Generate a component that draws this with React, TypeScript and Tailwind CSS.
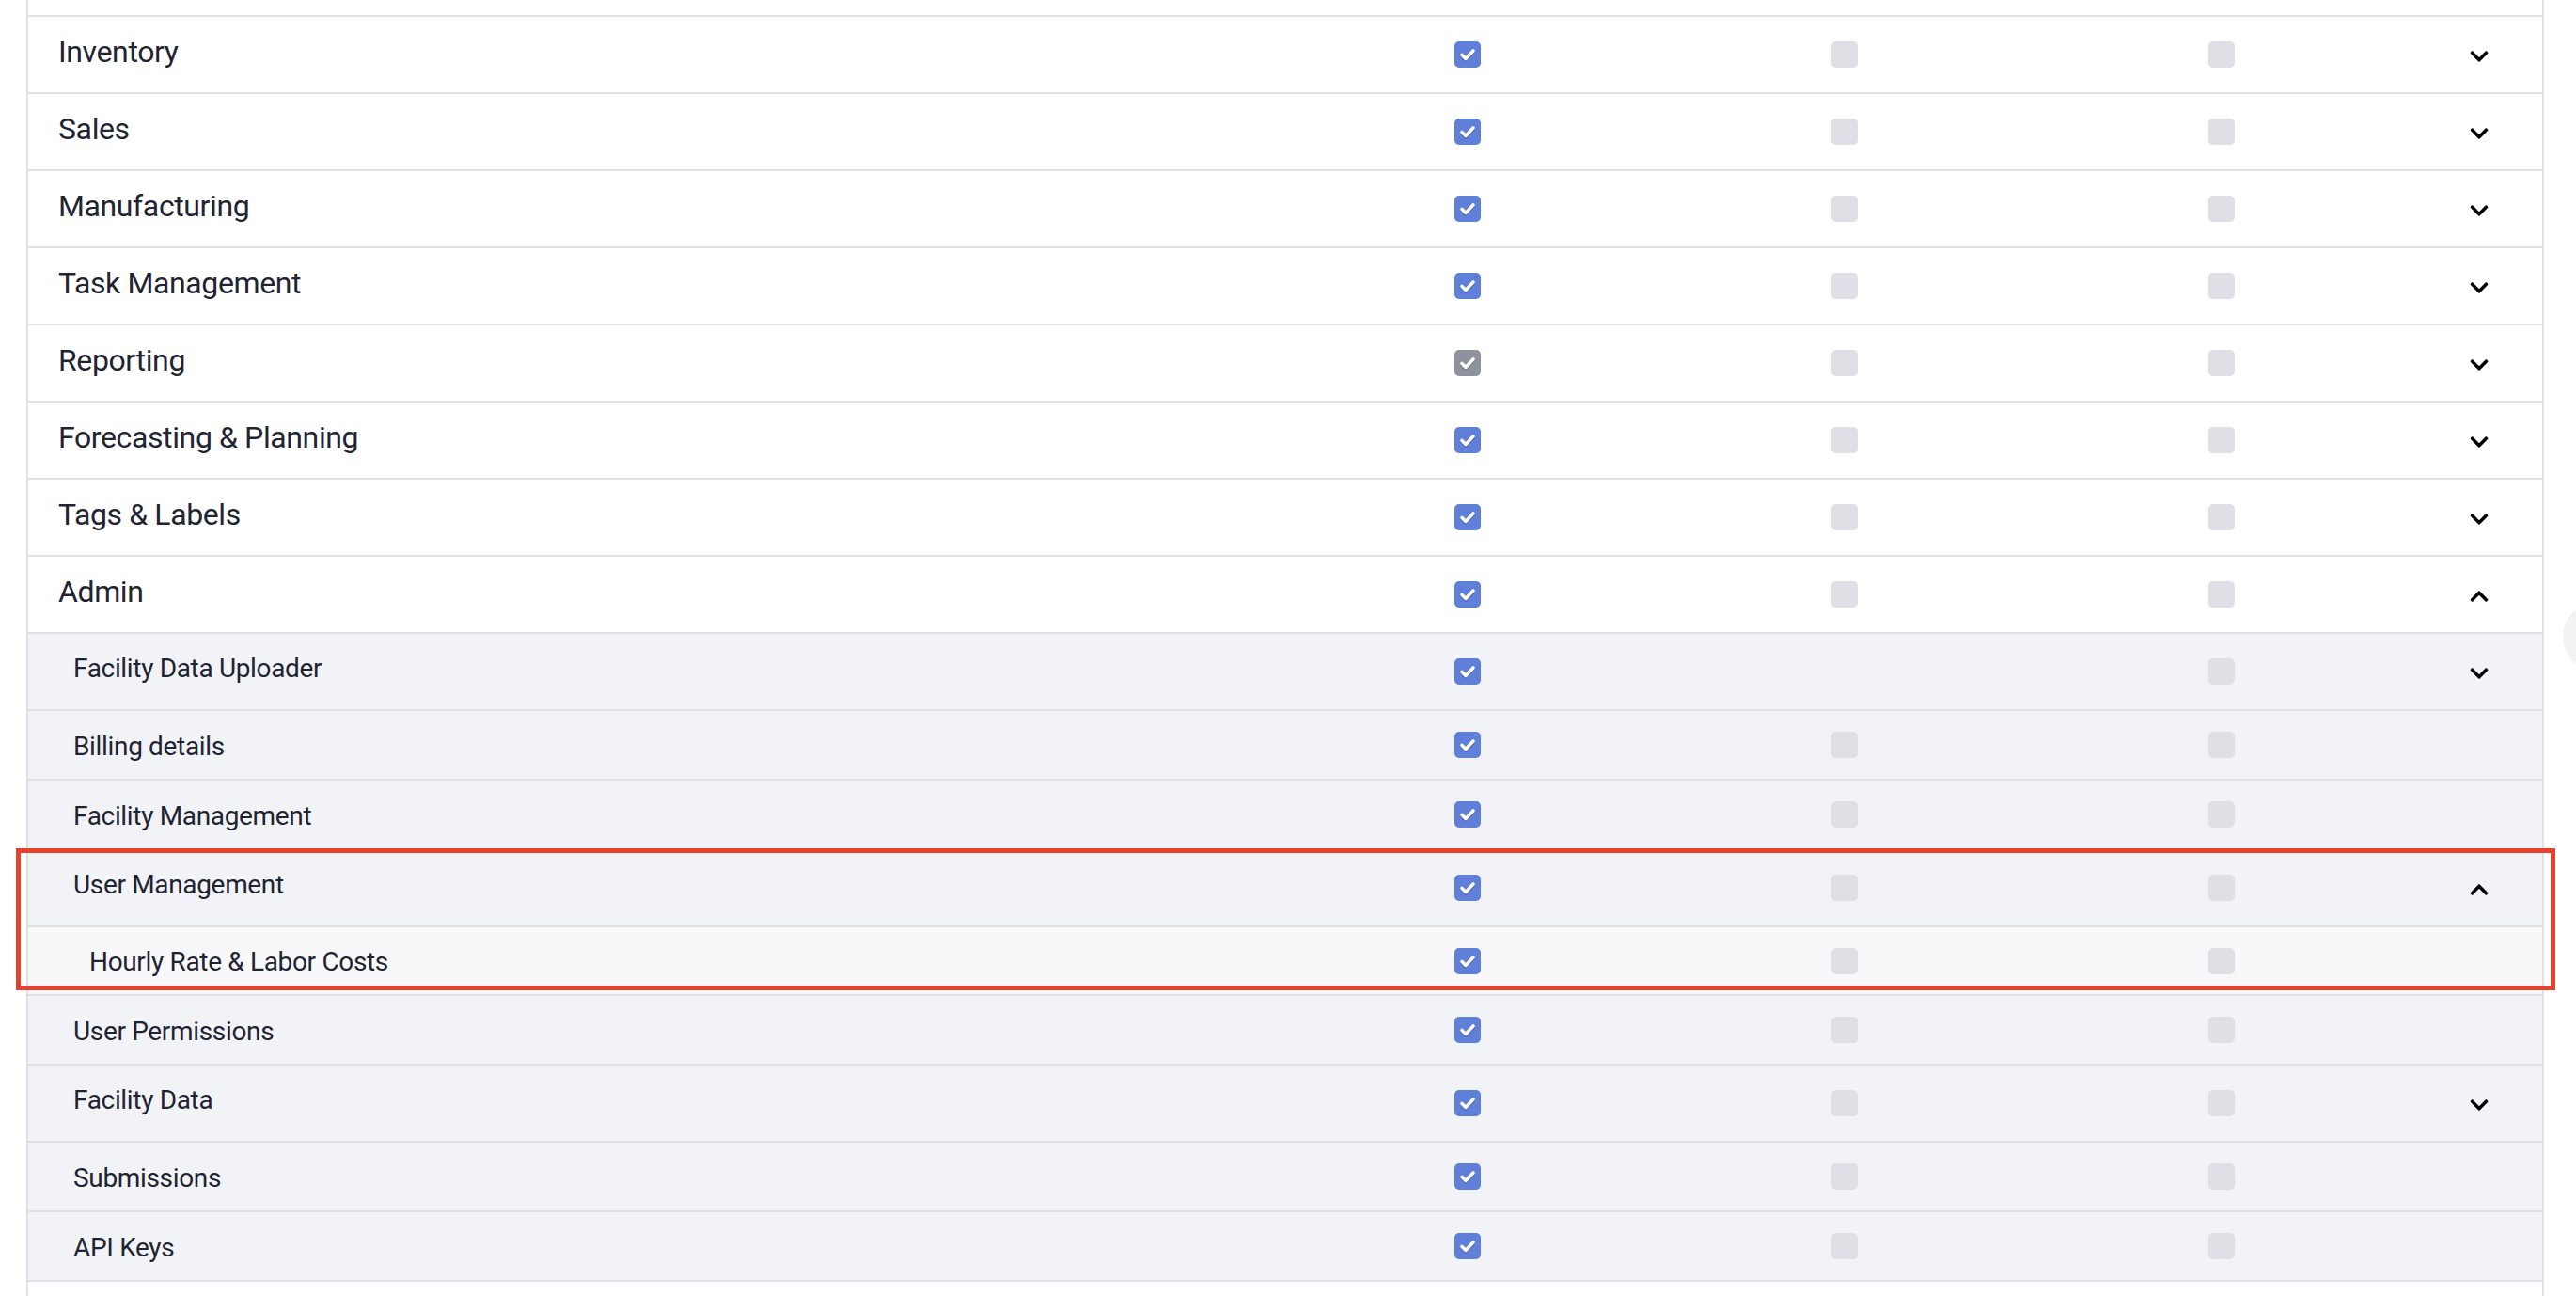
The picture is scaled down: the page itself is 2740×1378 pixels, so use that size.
import { FaChevronDown, FaChevronUp } from "react-icons/fa";

type Box = "on" | "grey" | "off" | "none";

type Row = {
    label: string;
    level: 0 | 1 | 2;
    boxes: [Box, Box, Box];
    chevron?: "down" | "up";
    h: string;
};

const rows: Row[] = [
    { label: "Inventory", level: 0, boxes: ["on", "off", "off"], chevron: "down", h: "h-[82px]" },
    { label: "Sales", level: 0, boxes: ["on", "off", "off"], chevron: "down", h: "h-[82px]" },
    { label: "Manufacturing", level: 0, boxes: ["on", "off", "off"], chevron: "down", h: "h-[82px]" },
    { label: "Task Management", level: 0, boxes: ["on", "off", "off"], chevron: "down", h: "h-[82px]" },
    { label: "Reporting", level: 0, boxes: ["grey", "off", "off"], chevron: "down", h: "h-[82px]" },
    { label: "Forecasting & Planning", level: 0, boxes: ["on", "off", "off"], chevron: "down", h: "h-[82px]" },
    { label: "Tags & Labels", level: 0, boxes: ["on", "off", "off"], chevron: "down", h: "h-[82px]" },
    { label: "Admin", level: 0, boxes: ["on", "off", "off"], chevron: "up", h: "h-[82px]" },
    { label: "Facility Data Uploader", level: 1, boxes: ["on", "none", "off"], chevron: "down", h: "h-[82px]" },
    { label: "Billing details", level: 1, boxes: ["on", "off", "off"], h: "h-[74px]" },
    { label: "Facility Management", level: 1, boxes: ["on", "off", "off"], h: "h-[74px]" },
    { label: "User Management", level: 1, boxes: ["on", "off", "off"], chevron: "up", h: "h-[82px]" },
    { label: "Hourly Rate & Labor Costs", level: 2, boxes: ["on", "off", "off"], h: "h-[73px]" },
    { label: "User Permissions", level: 1, boxes: ["on", "off", "off"], h: "h-[74px]" },
    { label: "Facility Data", level: 1, boxes: ["on", "off", "off"], chevron: "down", h: "h-[82px]" },
    { label: "Submissions", level: 1, boxes: ["on", "off", "off"], h: "h-[74px]" },
    { label: "API Keys", level: 1, boxes: ["on", "off", "off"], h: "h-[74px]" },
    { label: "", level: 0, boxes: ["none", "none", "none"], h: "h-[82px]" },
];

function Check({ state }: { state: Box }) {
    if (state === "none") return null;
    if (state === "off") {
        return <span className="block w-[28px] h-[28px] rounded-[5px] bg-[#dfe0e5]" />;
    }
    return (
        <span
            className={`flex items-center justify-center w-[28px] h-[28px] rounded-[5px] ${
                state === "on" ? "bg-[#5f7fd9]" : "bg-[#8e929c]"
            }`}
        >
            <svg
                width="28"
                height="28"
                viewBox="0 0 28 28"
                className="drop-shadow-[0_1.5px_0_rgba(0,0,0,0.35)]"
            >
                <path
                    d="M8 14.5 L12 18.5 L20 10"
                    fill="none"
                    stroke="white"
                    strokeWidth="3.6"
                    strokeLinecap="round"
                    strokeLinejoin="round"
                />
            </svg>
        </span>
    );
}

export default function App() {
    return (
        <div className="relative w-full h-[1378px] overflow-hidden bg-white font-['Roboto',sans-serif] text-[#1f2433]">
            <div className="ml-[28px] w-[2678px] border-x-2 border-[#e0e1e6]">
                {/* tail of the row above */}
                <div className="h-[18px] border-b-2 border-[#e0e1e6] bg-white" />

                {rows.map((row, i) => (
                    <div
                        key={i}
                        className={`grid grid-cols-[1fr_401px_401px_401px_141px] items-center border-b-2 border-[#e0e1e6] ${row.h} ${
                            row.level === 0 ? "bg-white" : row.level === 1 ? "bg-[#f2f3f7]" : "bg-[#f8f8fa]"
                        }`}
                    >
                        <div
                            className={`tracking-[-0.012em] ${row.chevron ? "pb-[7px]" : "pt-[3px]"} ${
                                row.level === 0
                                    ? "pl-[32px] text-[32px]"
                                    : row.level === 1
                                    ? "pl-[48px] text-[28px]"
                                    : "pl-[65px] text-[28px]"
                            }`}
                        >
                            {row.label}
                        </div>
                        {row.boxes.map((b, j) => (
                            <div key={j} className="flex justify-center">
                                <Check state={b} />
                            </div>
                        ))}
                        <div className="flex pl-[63px] pt-[3px] text-black">
                            {row.chevron === "down" && <FaChevronDown size={22} />}
                            {row.chevron === "up" && <FaChevronUp size={22} />}
                        </div>
                    </div>
                ))}
            </div>

            {/* highlight annotation */}
            <div className="absolute left-[17px] top-[902px] w-[2701px] h-[151px] border-[5px] border-[#e8412b]" />

            {/* scroll handle peeking from the right */}
            <div className="absolute left-[2726px] top-[641px] w-[72px] h-[72px] rounded-full bg-[#f3f3f5]" />
        </div>
    );
}
